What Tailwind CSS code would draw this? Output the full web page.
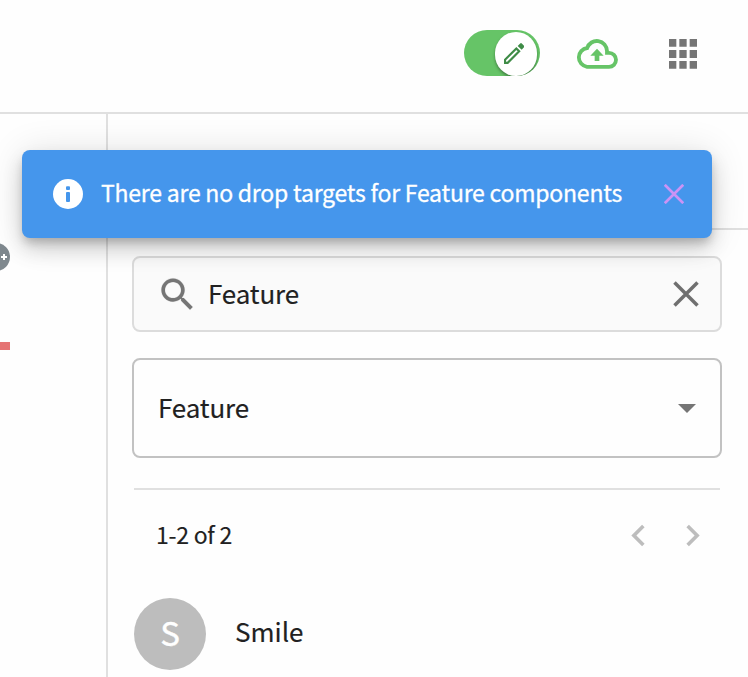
<!DOCTYPE html>
<html lang="en">
<head>
<meta charset="utf-8">
<title>Components</title>
<script src="https://cdn.jsdelivr.net/npm/@tailwindcss/browser@4"></script>
</head>
<body class="relative flex h-[677px] w-[748px] flex-col overflow-hidden bg-[#fefefe] font-['Noto_Sans_CJK_SC',sans-serif] text-[#212121] [-webkit-text-stroke-width:0.15px]">
<header class="flex h-[114px] shrink-0 items-start border-b-2 border-[#e0e0e0] pt-[30px] pl-[464px]">
  <button aria-label="Edit mode" class="flex h-[46px] w-[76px] justify-end overflow-hidden rounded-[23px] bg-[#66c467] pt-[2px] pr-[3px]">
    <span class="flex h-[44px] w-[42px] shrink-0 items-center justify-center rounded-full bg-white pr-1 shadow-[0_2px_3px_rgba(0,0,0,0.35)]">
      <svg class="mb-px h-[21px] w-[20px] shrink-0" viewBox="192 69 60 63" fill="#3f8c47"><path d="M195 128.500V119.500L229 85.500l8.500 8.500-34.500 34.500Z" fill="none" stroke="#3f8c47" stroke-width="6.500"/><path d="M233 78l7.500-7.500q2.500-2.500 5 0l6.500 6.500q2.500 2.500 0 5L245 89Z"/></svg>
    </span>
  </button>
  <svg class="mt-[9px] ml-[36px] h-[30px] w-[42px] overflow-visible" viewBox="384 72 126 90"><path d="M417 155.500H483a21 21 0 0 0 0-42H477V108a30.500 30.500 0 0 0-59.500-9a28.500 28.500 0 0 0-.5 56.500Z" fill="none" stroke="#66c467" stroke-width="11.500"/><path d="M447 101l20 21h-13v16h-14v-16h-13Z" fill="#66c467"/></svg>
  <svg class="mt-[9px] ml-[51px] h-[30px] w-[28px]" viewBox="0 0 84 90" fill="#757575"><path d="M0 0h22v23H0zM31 0h22v23H31zM62 0h22v23H62zM0 33h22v24H0zM31 33h22v24H31zM62 33h22v24H62zM0 66h22v23H0zM31 66h22v23H31zM62 66h22v23H62z"/></svg>
</header>
<div class="flex min-h-0 flex-1">
  <aside class="w-[108px] shrink-0 overflow-hidden border-r-2 border-[#e0e0e0] pt-[129px]">
    <div class="-ml-[18px] flex size-[28px] items-center justify-end rounded-full bg-[#7f888e] pr-[3px]">
      <svg class="size-[6px]" viewBox="0 0 6 6"><path d="M3 0v6M0 3h6" stroke="#fff" stroke-width="2"/></svg>
    </div>
    <div class="mt-[71px] h-2 w-[10px] bg-[#e57373]"></div>
  </aside>
  <main class="flex-1">
    <div class="h-[116px] border-b-2 border-[#e0e0e0]"></div>
    <div class="flex flex-col pt-[26px] pr-[26px] pl-6">
      <div class="flex h-[76px] items-center rounded-lg border-2 border-[#dcdcdc] bg-[#fafafa] pr-[21px] pl-[22px]">
        <svg class="size-[43px]" viewBox="0 0 24 24" fill="#757575"><path d="M15.500 14h-.79l-.28-.27C15.410 12.590 16 11.110 16 9.500 16 5.910 13.090 3 9.500 3S3 5.910 3 9.500 5.910 16 9.500 16c1.610 0 3.090-.59 4.230-1.570l.27.28v.79l5 4.990L20.490 19l-4.990-5zm-6 0C7.010 14 5 11.990 5 9.500S7.010 5 9.500 5 14 7.010 14 9.500 11.990 14 9.500 14z" stroke="#757575" stroke-width=".1"/></svg>
        <span class="ml-[9px] flex-1 pb-1 text-[26px] tracking-[-0.15px]">Feature</span>
        <svg class="size-[26px]" viewBox="0 0 26 26"><path d="M1.500 1.500l23 23M24.500 1.500l-23 23" stroke="#6f6f6f" stroke-width="3.500"/></svg>
      </div>
      <div class="mt-[26px] flex h-[100px] items-center justify-between rounded-lg border-2 border-[#c2c2c2] pr-6 pl-[24px]">
        <span class="pb-1 text-[26px] tracking-[-0.15px]">Feature</span>
        <svg class="h-[9px] w-[18px]" viewBox="0 0 18 9"><path d="M0 0h18l-9 9Z" fill="#757575"/></svg>
      </div>
      <div class="mx-[2px] mt-[30px] h-[2px] bg-[#e0e0e0]"></div>
      <div class="flex h-[92px] items-center pr-2 pb-[2px] pl-6">
        <span class="flex-1 pb-px text-[23px] tracking-[-0.25px]">1-2 of 2</span>
        <svg class="size-[43px]" viewBox="0 0 24 24" fill="#bdbdbd"><path d="M15.410 7.410L14 6l-6 6 6 6 1.410-1.410L10.830 12z"/></svg>
        <svg class="ml-[11px] size-[43px]" viewBox="0 0 24 24" fill="#bdbdbd"><path d="M10 6L8.590 7.410 13.170 12l-4.580 4.590L10 18l6-6z"/></svg>
      </div>
      <div class="mt-4 flex h-[72px] items-center pl-[2px]">
        <div class="flex size-[72px] items-center justify-center rounded-full bg-[#bdbdbd] pb-[2px] text-[33px] text-white [-webkit-text-stroke-width:0.4px]">S</div>
        <span class="ml-[29px] pb-[7px] text-[26px]">Smile</span>
      </div>
    </div>
  </main>
</div>
<div role="alert" class="absolute top-[150px] left-[22px] flex h-[88px] w-[690px] items-center rounded-lg bg-[#4596ec] pr-[28px] pl-[28px] text-white shadow-[0_6px_10px_-2px_rgba(0,0,0,0.2),0_12px_20px_rgba(0,0,0,0.14),0_2px_36px_rgba(0,0,0,0.12)] [-webkit-text-stroke-width:0.3px]">
  <svg class="size-9" viewBox="0 0 36 36"><circle cx="18" cy="18" r="15" fill="#fff"/><rect x="16" y="10.300" width="4" height="3.700" rx="1" fill="#4596ec"/><rect x="16" y="16" width="4" height="10" rx="1" fill="#4596ec"/></svg>
  <span class="ml-[15px] flex-1 pb-[3px] text-[23px] tracking-[-0.22px] whitespace-nowrap">There are no drop targets for Feature components</span>
  <svg class="size-5" viewBox="0 0 20 20"><path d="M.8.8l18.400 18.400M19.200.8L.8 19.200" stroke="#cb93f5" stroke-width="2.700"/></svg>
</div>
</body>
</html>
